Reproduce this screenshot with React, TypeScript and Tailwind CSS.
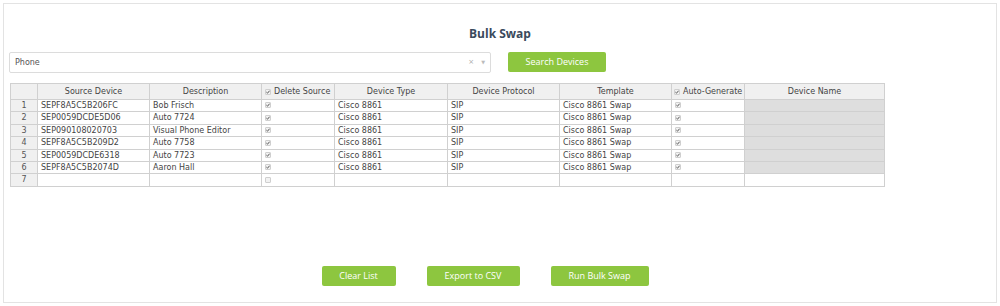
import React from "react";

const rows = [
  { src: "SEPF8A5C5B206FC", desc: "Bob Frisch", h: "h-[12px]" },
  { src: "SEP0059DCDE5D06", desc: "Auto 7724", h: "h-[13px]" },
  { src: "SEP090108020703", desc: "Visual Phone Editor", h: "h-[12px]" },
  { src: "SEPF8A5C5B209D2", desc: "Auto 7758", h: "h-[13px]" },
  { src: "SEP0059DCDE6318", desc: "Auto 7723", h: "h-[12px]" },
  { src: "SEPF8A5C5B2074D", desc: "Aaron Hall", h: "h-[12px]" },
];

function Check({ on = true }: { on?: boolean }) {
  return (
    <span className="inline-flex w-[6px] h-[6px] rounded-[1px] border border-[#cfcfcf] bg-[#f2f2f2] items-center justify-center align-middle">
      {on && (
        <svg width="4" height="4" viewBox="0 0 4 4">
          <path d="M0.4 2.1 L1.5 3.2 L3.6 0.7" stroke="#555" strokeWidth="1" fill="none" />
        </svg>
      )}
    </span>
  );
}

function Btn({ label, w }: { label: string; w: string }) {
  return (
    <button className={`${w} block h-[20px] rounded-[2px] bg-[#8dc63f] text-white text-[9px] font-normal leading-[20px]`}>
      {label}
    </button>
  );
}

export default function App() {
  const cell = "border border-[#d0d0d0] px-[3px] py-0 text-left leading-[10px] whitespace-nowrap";
  const head = "border border-[#d0d0d0] bg-[#f0f0f0] font-normal text-center py-0 leading-[10px] whitespace-nowrap";
  return (
    <div className="w-[1000px] h-[306px] bg-white p-[3px] font-['Open_Sans',sans-serif]">
      <div className="h-[300px] w-[994px] border border-[#e3e3e3] flex flex-col">
        <h1 className="mt-[22px] h-[16px] text-center text-[12px] font-bold text-[#3a4a5c] leading-[16px]">
          Bulk Swap
        </h1>

        <div className="mt-[10px] ml-[5px] flex items-start gap-[17px]">
          <div className="w-[482px] h-[21px] border border-[#dcdcdc] rounded-[2px] flex items-center px-[5px] text-[8px] text-[#555] font-['DejaVu_Sans',sans-serif]">
            <span className="flex-1">Phone</span>
            <span className="text-[#aaa] text-[7px] mr-[7px]">×</span>
            <span className="text-[#bbb] text-[5px]">▼</span>
          </div>
          <Btn label="Search Devices" w="w-[98px]" />
        </div>

        <div className="mt-[10px] ml-[6px]">
          <table className="border-collapse text-[8px] text-[#444] font-['DejaVu_Sans',sans-serif] table-fixed w-[874px]">
            <colgroup>
              <col className="w-[27px]" />
              <col className="w-[112px]" />
              <col className="w-[112px]" />
              <col className="w-[73px]" />
              <col className="w-[113px]" />
              <col className="w-[112px]" />
              <col className="w-[112px]" />
              <col className="w-[73px]" />
              <col className="w-[140px]" />
            </colgroup>
            <thead>
              <tr className="h-[16px]">
                <th className={head}></th>
                <th className={head}>Source Device</th>
                <th className={head}>Description</th>
                <th className={`${head} text-left pl-[3px]`}>
                  <span className="inline-flex items-center gap-[3px]">
                    <Check /> Delete Source
                  </span>
                </th>
                <th className={head}>Device Type</th>
                <th className={head}>Device Protocol</th>
                <th className={head}>Template</th>
                <th className={`${head} text-left pl-[2px]`}>
                  <span className="inline-flex items-center gap-[3px]">
                    <Check /> Auto-Generate
                  </span>
                </th>
                <th className={head}>Device Name</th>
              </tr>
            </thead>
            <tbody>
              {rows.map((r, i) => (
                <tr key={i} className={r.h}>
                  <td className={`${head} text-[#555]`}>{i + 1}</td>
                  <td className={cell}>{r.src}</td>
                  <td className={cell}>{r.desc}</td>
                  <td className={cell}><Check /></td>
                  <td className={cell}>Cisco 8861</td>
                  <td className={cell}>SIP</td>
                  <td className={cell}>Cisco 8861 Swap</td>
                  <td className={cell}><Check /></td>
                  <td className={`${cell} bg-[#dedede]`}></td>
                </tr>
              ))}
              <tr className="h-[13px]">
                <td className={`${head} text-[#555]`}>7</td>
                <td className={cell}></td>
                <td className={cell}></td>
                <td className={cell}><Check on={false} /></td>
                <td className={cell}></td>
                <td className={cell}></td>
                <td className={cell}></td>
                <td className={cell}></td>
                <td className={cell}></td>
              </tr>
            </tbody>
          </table>
        </div>

        <div className="mt-auto mb-[16px] flex justify-center gap-[31px] pr-[30px]">
          <Btn label="Clear List" w="w-[74px]" />
          <Btn label="Export to CSV" w="w-[93px]" />
          <Btn label="Run Bulk Swap" w="w-[98px]" />
        </div>
      </div>
    </div>
  );
}
